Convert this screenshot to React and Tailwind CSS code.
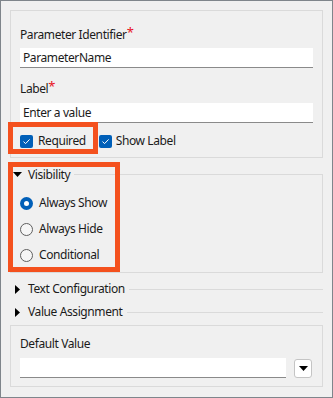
import React from "react";

function Checkbox() {
  return (
    <div className="w-[13px] h-[13px] rounded-[2px] bg-[#005fb8] flex items-center justify-center shrink-0">
      <svg width="9" height="9" viewBox="0 0 9 9">
        <path d="M1.5 4.6 L3.6 6.6 L7.6 2.4" fill="none" stroke="#fff" strokeWidth="1" />
      </svg>
    </div>
  );
}

function Radio({ checked }) {
  if (checked) {
    return (
      <div className="w-[13px] h-[13px] rounded-full bg-[#005fb8] flex items-center justify-center shrink-0">
        <div className="w-[5px] h-[5px] rounded-full bg-white" />
      </div>
    );
  }
  return <div className="w-[13px] h-[13px] rounded-full border border-[#5f5f5f] bg-[#f6f6f6] shrink-0" />;
}

function DownTri({ className }) {
  return (
    <svg width="9" height="5" viewBox="0 0 9 5" className={className}>
      <path d="M0 0 H9 L4.5 5 Z" fill="#000" />
    </svg>
  );
}

function RightTri({ className }) {
  return (
    <svg width="5" height="9" viewBox="0 0 5 9" className={className}>
      <path d="M0 0 L5 4.5 L0 9 Z" fill="#000" />
    </svg>
  );
}

function Field({ value, className = "" }) {
  return (
    <div className={`h-[20px] bg-white border-b border-[#8a8a8a] pl-[3px] flex items-center ${className}`}>
      {value}
    </div>
  );
}

function Star() {
  return <span className="text-[#e81123] text-[13px] leading-none relative -top-[2px]">*</span>;
}

export default function App() {
  return (
    <div
      className="relative w-[333px] h-[398px] border border-[#7f858b] bg-[#f0f0f0] text-[12px] leading-[16px] tracking-[-0.4px] text-[#1b1b1b] overflow-hidden"
      style={{ fontFamily: '"Noto Sans", "Liberation Sans", sans-serif' }}
    >
      {/* general panel */}
      <div className="mx-[9px] mt-[9px] border border-[#dadada] pl-[9px] pr-[9px] pt-[16px] pb-[6px]">
        <div className="h-[16px]">
          Parameter Identifier<Star />
        </div>
        <Field value="ParameterName" className="mt-[5px]" />
        <div className="mt-[13px] h-[16px]">
          Label<Star />
        </div>
        <Field value="Enter a value" className="mt-[6px]" />
        <div className="mt-[8px] h-[20px] flex items-center">
          <Checkbox />
          <span className="ml-[5px]">Required</span>
          <div className="ml-[13px]">
            <Checkbox />
          </div>
          <span className="ml-[4px]">Show Label</span>
        </div>
      </div>

      {/* visibility group */}
      <div className="mx-[9px] mt-[8px]">
        <div className="flex items-center h-[16px]">
          <DownTri className="ml-[3px]" />
          <span className="ml-[6px] relative top-[1px]">Visibility</span>
          <div className="flex-1 h-px bg-[#dadada] ml-[4px]" />
        </div>
        <div className="-mt-[8px] border-x border-b border-[#dadada] pt-[16px] pb-[4px] pl-[9px]">
          {[
            ["Always Show", true],
            ["Always Hide", false],
            ["Conditional", false],
          ].map(([label, on]) => (
            <div key={label} className="h-[26px] flex items-center">
              <Radio checked={on} />
              <span className="ml-[6px]">{label}</span>
            </div>
          ))}
        </div>
      </div>

      {/* collapsed sections */}
      <div className="mx-[9px] mt-[8px] flex items-center h-[16px]">
        <RightTri className="ml-[5px]" />
        <span className="ml-[8px]">Text Configuration</span>
        <div className="flex-1 h-px bg-[#dadada] ml-[4px]" />
      </div>
      <div className="mx-[9px] mt-[7px] flex items-center h-[16px]">
        <RightTri className="ml-[5px]" />
        <span className="ml-[8px]">Value Assignment</span>
        <div className="flex-1 h-px bg-[#dadada] ml-[4px]" />
      </div>

      {/* default value */}
      <div className="mx-[9px] mt-[5px] border border-[#dadada] pl-[9px] pr-[10px] pt-[10px] pb-[8px]">
        <div>Default Value</div>
        <div className="mt-[6px] flex items-center">
          <Field value="" className="flex-1" />
          <div className="ml-[8px] w-[18px] h-[19px] rounded-[3px] border border-[#c4c4c4] bg-white flex items-center justify-center">
            <DownTri />
          </div>
        </div>
      </div>

      {/* highlight annotations */}
      <div className="absolute left-[7px] top-[121px] w-[90px] h-[32px] border-[5px] border-[#f4511e]" />
      <div className="absolute left-[7px] top-[161px] w-[112px] h-[110px] border-[5px] border-[#f4511e]" />
    </div>
  );
}
